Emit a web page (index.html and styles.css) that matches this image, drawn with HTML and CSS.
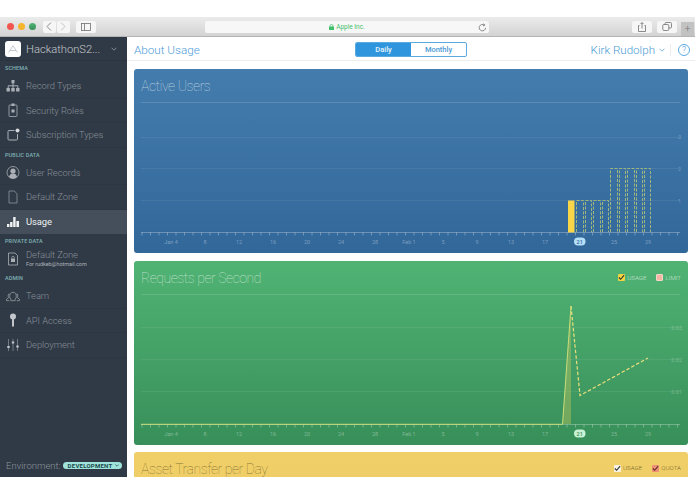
FILE: index.html
```html
<!DOCTYPE html>
<html lang="en">
<head>
<meta charset="utf-8">
<title>About Usage</title>
<link rel="stylesheet" href="styles.css">
</head>
<body>
<div class="top-gap"></div>
<div class="toolbar">
  <div class="lights"><i class="light red"></i><i class="light amber"></i><i class="light green"></i></div>
  <div class="nav-group">
    <span class="tbtn nav"><svg width="6" height="9" viewBox="0 0 6 9"><path d="M5 .5 1 4.5l4 4" class="tb-stroke"/></svg></span>
    <span class="tbtn nav"><svg width="6" height="9" viewBox="0 0 6 9"><path d="m1 .5 4 4-4 4" class="tb-stroke faint"/></svg></span>
  </div>
  <span class="tbtn side"><svg width="10" height="8" viewBox="0 0 10 8"><rect x=".5" y=".5" width="9" height="7" class="tb-stroke"/><path d="M3.5 .5v7" class="tb-stroke"/></svg></span>
  <div class="urlbar">
    <span class="url-text"><svg width="5" height="6" viewBox="0 0 5 6"><path d="M1 3V2a1.500 1.500 0 0 1 3 0v1" fill="none" stroke="#3fbf6a" stroke-width=".7"/><rect y="2.600" width="5" height="3.400" rx=".5" fill="#3fbf6a"/></svg>Apple Inc.</span>
    <svg class="reload" width="9" height="9" viewBox="0 0 9 9"><path d="M7.600 4.800a3.200 3.200 0 1 1-1.200-2.600" class="tb-stroke"/><path d="m5.600 .6 1.200 1.600-1.800.8" class="tb-stroke"/></svg>
  </div>
  <span class="tbtn act"><svg width="8" height="10" viewBox="0 0 8 10"><path d="M1.500 3.500H.5v6h7v-6h-1M4 6.500V.7M2.500 2 4 .5 5.500 2" class="tb-stroke"/></svg></span>
  <span class="tbtn act"><svg width="10" height="9" viewBox="0 0 10 9"><rect x=".8" y="2.500" width="6" height="6" rx="1" class="tb-stroke"/><path d="M3 2.500V1.500a1 1 0 0 1 1-1h4.500a1 1 0 0 1 1 1V5a1 1 0 0 1-1 1h-1.700" class="tb-stroke"/></svg></span>
  <span class="plus">+</span>
</div>
<div class="app">
  <aside class="sidebar">
    <div class="team-head">
      <span class="logo"><svg width="10" height="9" viewBox="0 0 10 9"><path d="M.5 7.500 5 .8l4.500 6.700M2 5.500h6" fill="none" stroke="#b9bdc2" stroke-width=".8"/></svg></span>
      <span class="team-name">HackathonS2...</span>
      <svg class="chev" width="6" height="4" viewBox="0 0 6 4"><path d="m.5.700 2.500 2.500L5.500.7" fill="none" stroke="#9aa1a8" stroke-width=".8"/></svg>
    </div>
    <div class="sec">SCHEMA</div>
    <div class="row"><svg class="ico" width="13" height="12" viewBox="0 0 13 12"><path d="M5 0h3v3.200H5zM0 8h3.400v3.500H0zM4.800 8h3.400v3.500H4.800zM9.600 8H13v3.500H9.600z" fill="#aab0b6"/><path d="M6.500 3v5M1.700 8V5.800h9.600V8" fill="none" stroke="#aab0b6"/></svg><span>Record Types</span></div>
    <div class="row"><svg class="ico" width="13" height="14" viewBox="0 0 13 14"><rect x="2.500" y="2" width="8" height="11.500" rx=".8" fill="none" stroke="#aab0b6" stroke-width=".8"/><path d="M5 .5h3V3H5z" fill="#aab0b6"/><rect x="5" y="6.500" width="3" height="3" fill="#aab0b6"/></svg><span>Security Roles</span></div>
    <div class="row"><svg class="ico" width="13" height="13" viewBox="0 0 13 13"><path d="M8 2.500H2.500a1 1 0 0 0-1 1V11a1 1 0 0 0 1 1H10a1 1 0 0 0 1-1V6" fill="none" stroke="#aab0b6"/><circle cx="11" cy="2.500" r="2" fill="#d5d8db"/></svg><span>Subscription Types</span></div>
    <div class="sec">PUBLIC DATA</div>
    <div class="row"><svg class="ico" width="13" height="13" viewBox="0 0 13 13"><circle cx="6.500" cy="6.500" r="6" fill="none" stroke="#aab0b6" stroke-width=".8"/><circle cx="6.500" cy="5" r="2.600" fill="#aab0b6"/><path d="M2.500 11c.5-2.500 2-3.500 4-3.500s3.500 1 4 3.500a6 6 0 0 1-8 0z" fill="#aab0b6"/></svg><span>User Records</span></div>
    <div class="row"><svg class="ico" width="13" height="14" viewBox="0 0 13 14"><path d="M2.500 1h5.300L10.500 3.800V13h-8z" fill="none" stroke="#8e959c" stroke-width=".8"/></svg><span>Default Zone</span></div>
    <div class="row active"><svg class="ico" width="13" height="11" viewBox="0 0 13 11"><path d="M.5 8h2.400v3H.5zM3.600 6H6v5H3.600zM6.700 1h2.400v10H6.700zM9.900 5h2.600v6H9.900z" fill="#f1f2f3"/></svg><span>Usage</span></div>
    <div class="sec">PRIVATE DATA</div>
    <div class="row tall"><svg class="ico" width="13" height="14" viewBox="0 0 13 14"><path d="M2 1h6.500L11 3.500V13H2z" fill="none" stroke="#aab0b6" stroke-width=".8"/><rect x="4.500" y="6.500" width="4" height="3.500" fill="#aab0b6"/><path d="M5.300 6.500V5.500a1.200 1.200 0 0 1 2.400 0v1" fill="none" stroke="#aab0b6" stroke-width=".7"/></svg><div class="two"><span>Default Zone</span><small>For rudkeb@hotmail.com</small></div></div>
    <div class="sec">ADMIN</div>
    <div class="row"><svg class="ico" width="15" height="12" viewBox="0 0 15 12"><path d="M5.200 11V9.300L4.200 8c-.6-2 0-6 3.300-6s3.900 4 3.300 6l-1 1.300V11zM4 4H2.800c-.8 1.200-.5 3 .2 3.600L.5 9.500v1.500h3M11 4h1.200c.8 1.200.5 3-.2 3.600l2.500 1.900v1.500h-3" fill="none" stroke="#aab0b6" stroke-width=".7"/></svg><span>Team</span></div>
    <div class="row"><svg class="ico" width="13" height="14" viewBox="0 0 13 14"><circle cx="6.500" cy="3.500" r="3" fill="#c3c7cb"/><path d="M5.500 6h2v7.500h-2z" fill="#c3c7cb"/></svg><span>API Access</span></div>
    <div class="row"><svg class="ico" width="13" height="12" viewBox="0 0 13 12"><path d="M2 0v12M6.500 0v12M11 0v12" stroke="#8e959c" stroke-width=".7"/><path d="M.8 7h2.400v2H.8zM5.300 2.500h2.400v2H5.300zM9.800 6.500h2.400v2H9.800z" fill="#c3c7cb"/></svg><span>Deployment</span></div>
    <div class="env"><span class="env-label">Environment:</span><span class="env-pill">DEVELOPMENT<svg width="4" height="3" viewBox="0 0 4 3"><path d="m.3.500 1.700 1.700L3.700.5" fill="none" stroke="#1c4a4a" stroke-width=".7"/></svg></span></div>
  </aside>
  <section class="content">
    <header class="page-head">
      <h1 class="page-title">About Usage</h1>
      <div class="seg"><span class="seg-item on">Daily</span><span class="seg-item">Monthly</span></div>
      <div class="user">
        <span class="user-name">Kirk Rudolph</span>
        <svg width="6" height="4" viewBox="0 0 6 4"><path d="m.5.700 2.500 2.500L5.500.7" fill="none" stroke="#5aa3d8" stroke-width=".8"/></svg>
        <span class="vr"></span>
        <span class="help">?</span>
      </div>
    </header>
    <div class="cards">
      <article class="card blue">
        <div class="card-head"><h2 class="card-title">Active Users</h2></div>
        <svg class="chart" width="554" height="150" viewBox="134 103 554 150">
          <path d="M141 137.500h539M141 168.500h539M141 200.500h539" class="grid"/>
          <text x="681" y="139" class="yl">3</text><text x="681" y="170.500" class="yl">2</text><text x="681" y="202.500" class="yl">1</text>
          <path d="M141 232.500h539" class="axis"/>
          <path d="M141.500 234h539" class="ticks"/>
          <g class="xl"><text x="171" y="244">Jan 4</text><text x="205" y="244">8</text><text x="239" y="244">12</text><text x="273" y="244">16</text><text x="307" y="244">20</text><text x="341" y="244">24</text><text x="375" y="244">28</text><text x="409" y="244">Feb 1</text><text x="443" y="244">5</text><text x="477" y="244">9</text><text x="511" y="244">13</text><text x="545" y="244">17</text><text x="614" y="244">25</text><text x="648" y="244">29</text></g>
          <rect x="574" y="237.500" width="11.500" height="8" rx="4" class="pill-blue"/><text x="579.700" y="243.800" class="pill-t-blue">21</text>
          <rect x="568" y="200.500" width="6.500" height="32" fill="#f9d548"/>
          <g class="dash">
            <path d="M576.500 232v-31.500h7V232"/><path d="M585.500 232v-31.500h6V232"/><path d="M593.500 232v-31.500h7V232"/><path d="M602.500 232v-31.500h6V232"/>
            <path d="M610.500 232v-63.500h7V232"/><path d="M619.500 232v-63.500h6V232"/><path d="M627.500 232v-63.500h7V232"/><path d="M636.500 232v-63.500h6V232"/><path d="M644.500 232v-63.500h6V232"/>
          </g>
        </svg>
      </article>
      <article class="card green">
        <div class="card-head">
          <h2 class="card-title">Requests per Second</h2>
          <div class="legend">
            <span class="leg"><i class="box yellow"><svg width="8" height="7" viewBox="0 0 8 7"><path d="M1 3.500 3 5.500 7 .8" fill="none" stroke="#2b3a2a" stroke-width="1.300"/></svg></i>USAGE</span>
            <span class="leg"><i class="box pink"></i>LIMIT</span>
          </div>
        </div>
        <svg class="chart" width="554" height="150" viewBox="134 295 554 150">
          <path d="M141 327.500h539M141 359.500h539M141 391.500h539" class="grid"/>
          <text x="682" y="330" class="yl">0.03</text><text x="682" y="362" class="yl">0.02</text><text x="682" y="394" class="yl">0.01</text>
          <path d="M141 424.500h539" class="axis"/>
          <path d="M141.500 426h539" class="ticks"/>
          <g class="xl"><text x="171" y="436">Jan 4</text><text x="205" y="436">8</text><text x="239" y="436">12</text><text x="273" y="436">16</text><text x="307" y="436">20</text><text x="341" y="436">24</text><text x="375" y="436">28</text><text x="409" y="436">Feb 1</text><text x="443" y="436">5</text><text x="477" y="436">9</text><text x="511" y="436">13</text><text x="545" y="436">17</text><text x="614" y="436">25</text><text x="648" y="436">29</text></g>
          <rect x="574" y="429.500" width="11.500" height="8" rx="4" class="pill-green"/><text x="579.700" y="435.800" class="pill-t-green">21</text>
          <path d="M562.500 424 571 306v118z" fill="#c9c95f" fill-opacity=".4"/>
          <path d="M141 424.300h421.500L571 306" fill="none" stroke="#c9dc7c" stroke-width="1"/>
          <path d="M571 306l9 89.500 68-37.500" fill="none" stroke="#ecdf7c" stroke-width="1.200" stroke-dasharray="3.500 2"/>
        </svg>
      </article>
      <article class="card yellow-card">
        <div class="card-head">
          <h2 class="card-title dark">Asset Transfer per Day</h2>
          <div class="legend dark-legend">
            <span class="leg"><i class="box white"><svg width="8" height="7" viewBox="0 0 8 7"><path d="M1 3.500 3 5.500 7 .8" fill="none" stroke="#333" stroke-width="1.300"/></svg></i>USAGE</span>
            <span class="leg"><i class="box rose"><svg width="8" height="7" viewBox="0 0 8 7"><path d="M1 3.500 3 5.500 7 .8" fill="none" stroke="#63302a" stroke-width="1.300"/></svg></i>QUOTA</span>
          </div>
        </div>
      </article>
    </div>
  </section>
</div>
</body>
</html>
```
FILE: styles.css
```css
* { box-sizing: border-box; }
html, body { margin: 0; padding: 0; }
body {
  width: 695px;
  height: 494px;
  overflow: hidden;
  background: #fff;
  font-family: Roboto, "Liberation Sans", sans-serif;
}
.top-gap { height: 17px; }

/* browser toolbar */
.toolbar {
  height: 20px;
  display: flex;
  align-items: center;
  padding-left: 6.500px;
  background: linear-gradient(#ebebeb, #d3d3d3);
  border-bottom: 1px solid #b4b4b4;
}
.lights { display: flex; gap: 4px; width: 36px; }
.light { display: block; width: 7px; height: 7px; border-radius: 50%; }
.red { background: #f2564f; }
.amber { background: #f5b52e; }
.green { background: #30c048; }
.nav-group { display: flex; gap: 1px; margin-right: 6px; }
.tbtn {
  display: flex;
  align-items: center;
  justify-content: center;
  height: 12px;
  background: #f6f6f6;
  border-radius: 2px;
}
.nav { width: 13px; }
.side { width: 20px; margin-right: 109.500px; }
.act { width: 20px; margin-right: 5px; }
.tb-stroke { fill: none; stroke: #6f6f6f; stroke-width: .8; }
.faint { stroke: #b5b5b5; }
.urlbar {
  position: relative;
  width: 284px;
  height: 12px;
  margin-right: 143px;
  display: flex;
  align-items: center;
  justify-content: center;
  background: #f7f7f7;
  border-radius: 2px;
}
.url-text {
  display: flex;
  align-items: center;
  gap: 2px;
  font-size: 6.500px;
  color: #3fbf6a;
}
.reload { position: absolute; right: 2px; top: 2px; }
.plus {
  width: 13px;
  height: 14px;
  margin: 5px 0 0 -1px;
  text-align: center;
  font-size: 11px;
  line-height: 14px;
  font-weight: 300;
  color: #7d7d7d;
  background: #c2c2c2;
}

/* application shell */
.app { display: flex; height: 440px; overflow: hidden; }
.sidebar {
  width: 127px;
  flex: none;
  display: flex;
  flex-direction: column;
  background: #303a46;
  color: #868e96;
}
.team-head {
  height: 24px;
  flex: none;
  display: flex;
  align-items: center;
  padding: 1px 10px 0 5px;
  border-bottom: 1px solid #2a333e;
}
.logo {
  width: 16px;
  height: 16px;
  margin-right: 5px;
  display: flex;
  align-items: center;
  justify-content: center;
  background: #fff;
  border-radius: 3px;
}
.team-name { flex: 1; font-size: 11.200px; font-weight: 300; color: #c5c9cd; white-space: nowrap; }
.sec {
  height: 13px;
  padding-left: 5px;
  flex: none;
  font-size: 5.500px;
  line-height: 14px;
  font-weight: 500;
  letter-spacing: .1px;
  color: #7fb0b4;
}
.row {
  height: 24.500px;
  flex: none;
  display: flex;
  align-items: center;
  padding-left: 6px;
  font-size: 9.400px;
  letter-spacing: -.05px;
  font-weight: 300;
  border-bottom: 1px solid #2d3641;
}
.row.tall { height: 24px; border-bottom: 0; }
.row.active { background: #444f5b; color: #f0f1f2; border-bottom: 0; font-weight: 400; }
.ico { width: 14px; margin-right: 6px; flex: none; }
.two { display: flex; flex-direction: column; line-height: 10px; }
.two small { font-size: 5.500px; line-height: 8px; font-weight: 400; color: #aab0b6; }
.env {
  margin-top: auto;
  height: 23px;
  display: flex;
  align-items: center;
  padding-left: 6px;
  gap: 2px;
}
.env-label { font-size: 9.500px; font-weight: 300; color: #8c949b; }
.env-pill {
  display: flex;
  align-items: center;
  gap: 2px;
  height: 7px;
  padding: 0 3px 0 5px;
  border-radius: 4px;
  background: #9fe3dc;
  font-size: 6px;
  font-weight: 700;
  letter-spacing: .25px;
  color: #1c4a4a;
}

/* content */
.content { flex: 1; min-width: 0; display: flex; flex-direction: column; }
.page-head {
  position: relative;
  height: 24px;
  flex: none;
  display: flex;
  align-items: center;
  padding: 2px 5px 0 7px;
  border-bottom: 1px solid #eeeeee;
}
.page-title { flex: 1; margin: 0; font-size: 11.700px; font-weight: 300; color: #4b9bd6; }
.seg {
  position: absolute;
  left: 228px;
  top: 5px;
  width: 112px;
  height: 15px;
  display: flex;
  border: 1px solid #5aa9e0;
  border-radius: 2px;
  overflow: hidden;
}
.seg-item {
  flex: 1;
  text-align: center;
  font-size: 7.500px;
  line-height: 13px;
  font-weight: 500;
  color: #4b9bd6;
}
.seg-item.on { background: #2f96dd; color: #e8f4fc; }
.user { display: flex; align-items: center; }
.user-name { font-size: 11.600px; font-weight: 300; color: #4b9bd6; margin-right: 4px; }
.vr { width: 1px; height: 12px; margin: 0 7px 0 5px; background: #ececec; }
.help {
  width: 12px;
  height: 12px;
  border: 1px solid #5aa9e0;
  border-radius: 50%;
  text-align: center;
  font-size: 9px;
  line-height: 10px;
  font-weight: 300;
  color: #4b9bd6;
}
.cards { display: flex; flex-direction: column; gap: 8px; padding: 8px 7px 0; }
.card { height: 184px; flex: none; border-radius: 3px; overflow: hidden; }
.blue { background: linear-gradient(#447dad, #32679a); }
.green { background: linear-gradient(#50b374, #388f59); }
.yellow-card { margin-top: -1px; background: linear-gradient(#f0cf68, #eec95f); }
.card-head {
  height: 34px;
  margin: 0 8px 0 7px;
  display: flex;
  align-items: center;
  justify-content: space-between;
  border-bottom: 1px solid rgba(255, 255, 255, .14);
}
.card-title {
  margin: 0;
  font-size: 14px;
  letter-spacing: -.45px;
  font-weight: 100;
  color: rgba(255, 255, 255, .62);
}
.card-title.dark { color: rgba(70, 60, 20, .62); }
.legend { display: flex; gap: 10px; margin-right: -1px; }
.leg {
  display: flex;
  align-items: center;
  gap: 2px;
  font-size: 6.200px;
  font-weight: 300;
  color: rgba(255, 255, 255, .7);
}
.dark-legend { margin-top: -1px; }
.dark-legend .leg { color: rgba(70, 60, 20, .75); }
.box {
  display: flex;
  align-items: center;
  justify-content: center;
  width: 7px;
  height: 7px;
  border-radius: 1px;
}
.yellow { background: #f2d443; }
.pink { background: #f3b6a5; border: 1px solid #f6d6ca; }
.white { background: #f6f3e6; }
.rose { background: #ec8f74; }
.chart { display: block; }
.grid { stroke: rgba(255, 255, 255, .07); stroke-width: 1; fill: none; }
.axis { stroke: rgba(255, 255, 255, .28); stroke-width: 1; fill: none; }
.ticks { stroke: rgba(255, 255, 255, .3); stroke-width: 3; stroke-dasharray: 1 7.500; fill: none; }
.yl { font-size: 5.500px; fill: rgba(255, 255, 255, .3); text-anchor: end; }
.xl { font-size: 5.500px; fill: rgba(255, 255, 255, .36); text-anchor: middle; }
.pill-blue { fill: #b5def7; }
.pill-green { fill: #c8f2d4; }
.pill-t-blue { font-size: 5.500px; font-weight: 500; fill: #2f6a9c; text-anchor: middle; }
.pill-t-green { font-size: 5.500px; font-weight: 500; fill: #388f59; text-anchor: middle; }
.dash { fill: none; stroke: #9fb67c; stroke-width: 1; stroke-dasharray: 3 1.500; }
```
